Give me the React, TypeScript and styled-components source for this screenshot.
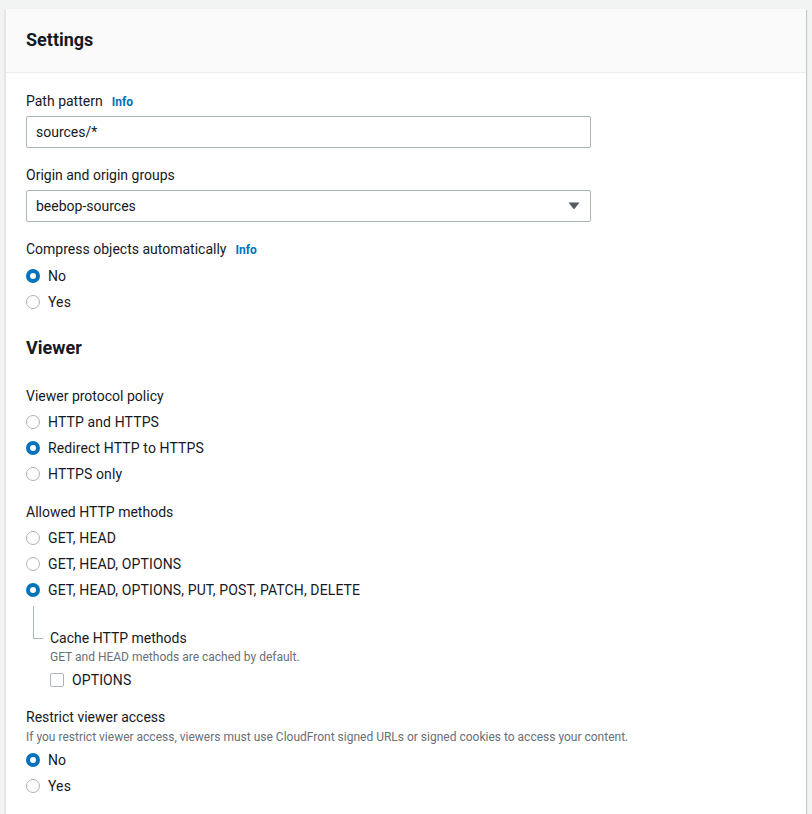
import styled, { createGlobalStyle } from 'styled-components';

const GlobalStyle = createGlobalStyle`
  html, body {
    margin: 0;
    padding: 0;
    background: #f2f3f3;
    font-family: Roboto, "Noto Sans", Arial, sans-serif;
    color: #16191f;
  }
`;

const Page = styled.div`
  padding: 9px 6px 0 5px;
  height: 805px;
  overflow: hidden;
`;

const Card = styled.section`
  background: #fff;
  border-left: 1px solid #e4e6e6;
  box-shadow: 0 1px 1px 0 rgba(0, 28, 36, 0.3), 1px 1px 1px 0 rgba(0, 28, 36, 0.15);
  min-height: 820px;
`;

const CardHeader = styled.header`
  height: 64px;
  box-sizing: border-box;
  background: #fafafa;
  border-bottom: 1px solid #eaeded;
  display: flex;
  align-items: center;
  padding: 0 20px 1px;
`;

const Title = styled.h2`
  margin: 0;
  font-size: 18px;
  line-height: 22px;
  font-weight: 700;
`;

const CardBody = styled.div`
  padding: 17px 20px 20px;
  display: flex;
  flex-direction: column;
`;

const Field = styled.div<{ $top?: number }>`
  display: flex;
  flex-direction: column;
  margin-top: ${(p) => p.$top ?? 0}px;
`;

const Label = styled.div`
  font-size: 14px;
  line-height: 22px;
  display: flex;
  align-items: baseline;
  gap: 9px;
`;

const InfoLink = styled.a`
  color: #0073bb;
  font-size: 12px;
  font-weight: 700;
  text-decoration: none;
`;

const Description = styled.div<{ $top?: number }>`
  margin-top: ${(p) => p.$top ?? 0}px;
  font-size: 12px;
  line-height: 16px;
  color: #687078;
`;

const TextInput = styled.input`
  margin-top: 3px;
  width: 565px;
  height: 32px;
  box-sizing: border-box;
  border: 1px solid #aab7b8;
  border-radius: 2px;
  padding: 0 9px;
  font: inherit;
  font-size: 14px;
  color: #16191f;
  outline: none;
`;

const SelectBox = styled.div`
  margin-top: 4px;
  width: 565px;
  height: 32px;
  box-sizing: border-box;
  border: 1px solid #aab7b8;
  border-radius: 2px;
  padding: 0 10px 0 9px;
  font-size: 14px;
  display: flex;
  align-items: center;
  justify-content: space-between;
`;

const SectionTitle = styled.h3<{ $top: number }>`
  margin: ${(p) => p.$top}px 0 0;
  font-size: 18px;
  line-height: 22px;
  font-weight: 700;
`;

const OptionList = styled.div<{ $top?: number }>`
  display: flex;
  flex-direction: column;
  margin-top: ${(p) => p.$top ?? 2}px;
`;

const OptionRow = styled.label`
  height: 26px;
  display: flex;
  align-items: center;
  gap: 8px;
  font-size: 14px;
  letter-spacing: 0.12px;
`;

const RadioDot = styled.span<{ $checked?: boolean }>`
  width: 14px;
  height: 14px;
  box-sizing: border-box;
  border-radius: 50%;
  flex: none;
  background: #fff;
  border: ${(p) => (p.$checked ? '4px solid #0073bb' : '1px solid #aab7b8')};
`;

const CheckBox = styled.span`
  width: 14px;
  height: 14px;
  box-sizing: border-box;
  border: 1px solid #aab7b8;
  border-radius: 2px;
  flex: none;
`;

const Nested = styled.div`
  position: relative;
  padding-left: 24px;
  margin-top: 24px;
  &::before {
    content: '';
    position: absolute;
    left: 7px;
    top: -21px;
    width: 9px;
    height: 32px;
    border-left: 1px solid #aab7b8;
    border-bottom: 1px solid #aab7b8;
  }
`;

const Arrow = () => (
  <svg width="12" height="8" viewBox="0 0 12 8">
    <path d="M0.5 0.5 H11.5 L6 7.5 Z" fill="#545b64" />
  </svg>
);

type Opt = { label: string; checked?: boolean };

const RadioGroup = ({ options, top }: { options: Opt[]; top?: number }) => (
  <OptionList $top={top}>
    {options.map((o) => (
      <OptionRow key={o.label}>
        <RadioDot $checked={o.checked} />
        {o.label}
      </OptionRow>
    ))}
  </OptionList>
);

export default function App() {
  return (
    <>
      <GlobalStyle />
      <Page>
        <Card>
          <CardHeader>
            <Title>Settings</Title>
          </CardHeader>
          <CardBody>
            <Field>
              <Label>
                Path pattern <InfoLink href="#">Info</InfoLink>
              </Label>
              <TextInput defaultValue="sources/*" />
            </Field>

            <Field $top={16}>
              <Label>Origin and origin groups</Label>
              <SelectBox>
                <span>beebop-sources</span>
                <Arrow />
              </SelectBox>
            </Field>

            <Field $top={16}>
              <Label>
                Compress objects automatically <InfoLink href="#">Info</InfoLink>
              </Label>
              <RadioGroup options={[{ label: 'No', checked: true }, { label: 'Yes' }]} />
            </Field>

            <SectionTitle $top={22}>Viewer</SectionTitle>

            <Field $top={26}>
              <Label>Viewer protocol policy</Label>
              <RadioGroup
                options={[
                  { label: 'HTTP and HTTPS' },
                  { label: 'Redirect HTTP to HTTPS', checked: true },
                  { label: 'HTTPS only' },
                ]}
              />
            </Field>

            <Field $top={14}>
              <Label>Allowed HTTP methods</Label>
              <RadioGroup
                options={[
                  { label: 'GET, HEAD' },
                  { label: 'GET, HEAD, OPTIONS' },
                  { label: 'GET, HEAD, OPTIONS, PUT, POST, PATCH, DELETE', checked: true },
                ]}
              />
              <Nested>
                <Label>Cache HTTP methods</Label>
                <Description>GET and HEAD methods are cached by default.</Description>
                <OptionList $top={2}>
                  <OptionRow>
                    <CheckBox />
                    OPTIONS
                  </OptionRow>
                </OptionList>
              </Nested>
            </Field>

            <Field $top={13}>
              <Label>Restrict viewer access</Label>
              <Description $top={1}>
                If you restrict viewer access, viewers must use CloudFront signed URLs or signed cookies to access your content.
              </Description>
              <RadioGroup top={2} options={[{ label: 'No', checked: true }, { label: 'Yes' }]} />
            </Field>
          </CardBody>
        </Card>
      </Page>
    </>
  );
}
